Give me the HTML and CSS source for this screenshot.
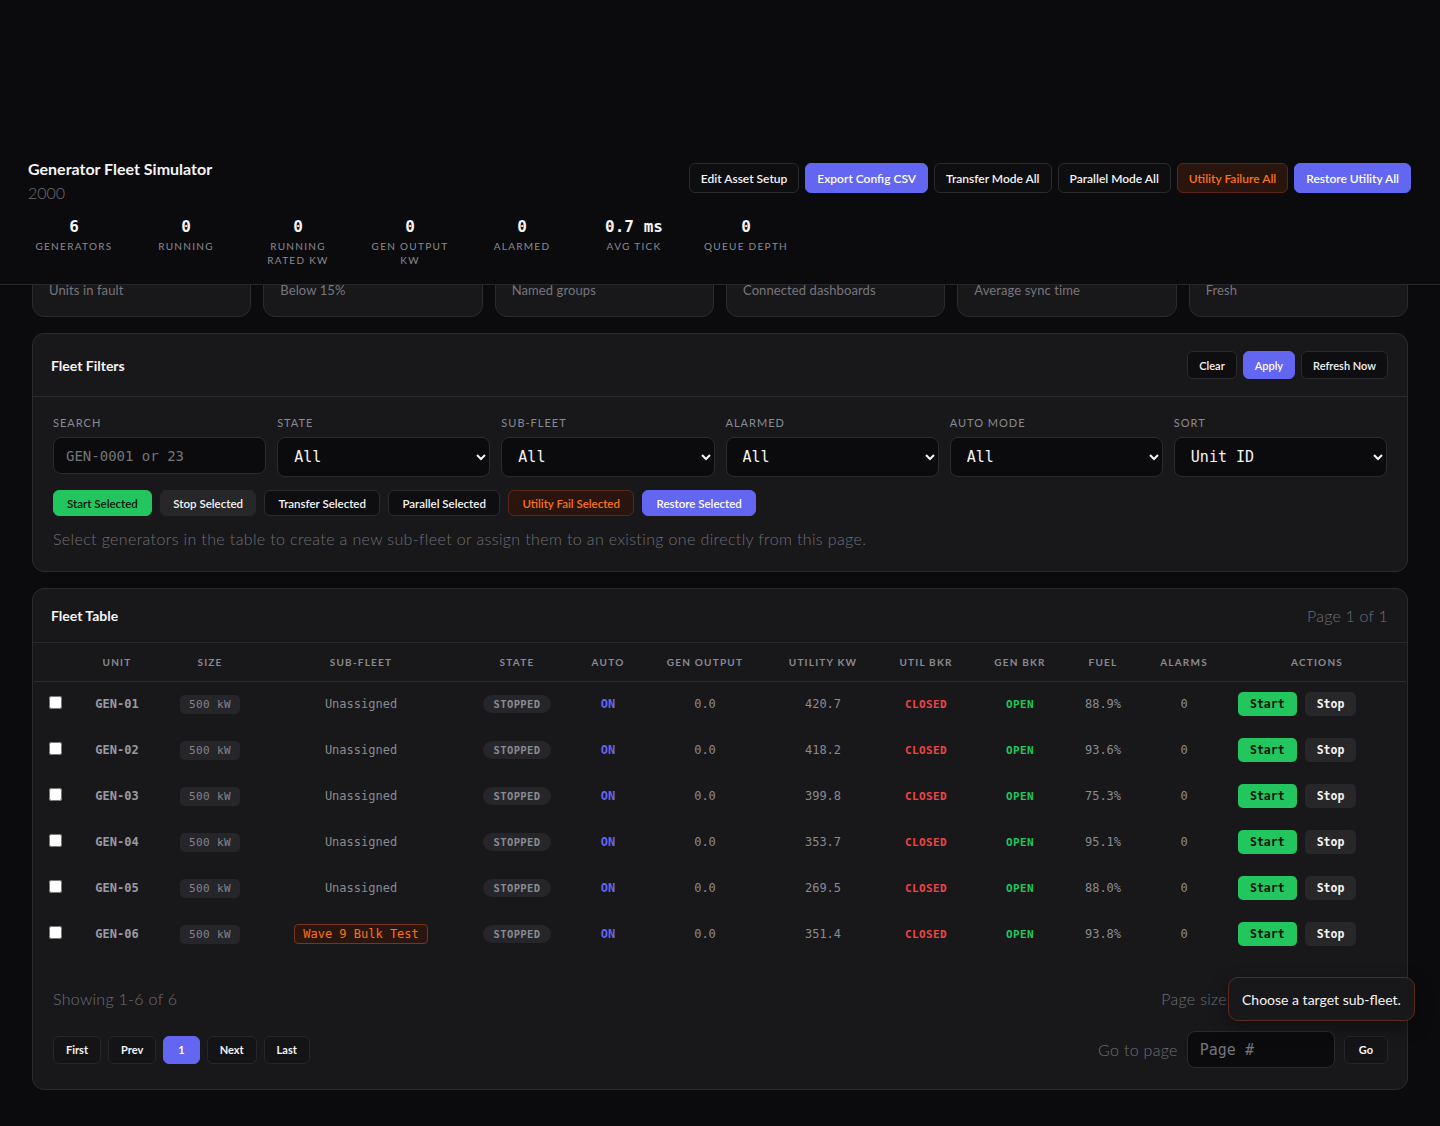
FILE: index.html
```html
<!DOCTYPE html>
<html lang="en">
<head>
<meta charset="utf-8">
<title>Generator Fleet Simulator</title>
<link rel="stylesheet" href="styles.css">
</head>
<body>
<header class="topbar">
  <div class="topbar-row">
    <div class="brand">
      <h1>Generator Fleet Simulator</h1>
      <div class="brand-sub">2000</div>
    </div>
    <div class="top-actions">
      <button class="btn btn-dark">Edit Asset Setup</button>
      <button class="btn btn-primary">Export Config CSV</button>
      <button class="btn btn-dark">Transfer Mode All</button>
      <button class="btn btn-dark">Parallel Mode All</button>
      <button class="btn btn-warn">Utility Failure All</button>
      <button class="btn btn-primary">Restore Utility All</button>
    </div>
  </div>
  <div class="stats">
    <div class="stat"><div class="stat-value">6</div><div class="stat-label">Generators</div></div>
    <div class="stat"><div class="stat-value">0</div><div class="stat-label">Running</div></div>
    <div class="stat"><div class="stat-value">0</div><div class="stat-label">Running Rated kW</div></div>
    <div class="stat"><div class="stat-value">0</div><div class="stat-label">Gen Output kW</div></div>
    <div class="stat"><div class="stat-value">0</div><div class="stat-label">Alarmed</div></div>
    <div class="stat"><div class="stat-value">0.7 ms</div><div class="stat-label">Avg Tick</div></div>
    <div class="stat"><div class="stat-value">0</div><div class="stat-label">Queue Depth</div></div>
  </div>
</header>

<main class="page">
  <section class="cards">
    <div class="card"><div class="card-label">Faulted</div><div class="card-value">0</div><div class="card-sub">Units in fault</div></div>
    <div class="card"><div class="card-label">Low Fuel</div><div class="card-value">0</div><div class="card-sub">Below 15%</div></div>
    <div class="card"><div class="card-label">Sub-Fleets</div><div class="card-value">1</div><div class="card-sub">Named groups</div></div>
    <div class="card"><div class="card-label">Clients</div><div class="card-value">1</div><div class="card-sub">Connected dashboards</div></div>
    <div class="card"><div class="card-label">Sync</div><div class="card-value">0.7 ms</div><div class="card-sub">Average sync time</div></div>
    <div class="card"><div class="card-label">Snapshot</div><div class="card-value">OK</div><div class="card-sub">Fresh</div></div>
  </section>

  <section class="panel">
    <div class="panel-head">
      <h2>Fleet Filters</h2>
      <div class="head-actions">
        <button class="btn btn-dark btn-sm">Clear</button>
        <button class="btn btn-primary btn-sm">Apply</button>
        <button class="btn btn-dark btn-sm">Refresh Now</button>
      </div>
    </div>
    <div class="filters-body">
      <div class="filter-grid">
        <label class="field"><span class="field-label">Search</span><input class="input" type="text" placeholder="GEN-0001 or 23"></label>
        <label class="field"><span class="field-label">State</span><select class="select"><option>All</option></select></label>
        <label class="field"><span class="field-label">Sub-Fleet</span><select class="select"><option>All</option></select></label>
        <label class="field"><span class="field-label">Alarmed</span><select class="select"><option>All</option></select></label>
        <label class="field"><span class="field-label">Auto Mode</span><select class="select"><option>All</option></select></label>
        <label class="field"><span class="field-label">Sort</span><select class="select"><option>Unit ID</option></select></label>
      </div>
      <div class="bulk-actions">
        <button class="btn btn-xs btn-success">Start Selected</button>
        <button class="btn btn-xs btn-muted btn-wide">Stop Selected</button>
        <button class="btn btn-xs btn-dark">Transfer Selected</button>
        <button class="btn btn-xs btn-dark">Parallel Selected</button>
        <button class="btn btn-xs btn-warn">Utility Fail Selected</button>
        <button class="btn btn-xs btn-primary">Restore Selected</button>
      </div>
      <p class="hint">Select generators in the table to create a new sub-fleet or assign them to an existing one directly from this page.</p>
    </div>
  </section>

  <section class="panel">
    <div class="panel-head panel-head-short">
      <h2>Fleet Table</h2>
      <span class="page-info">Page 1 of 1</span>
    </div>
    <table class="fleet">
      <colgroup>
        <col class="c-chk"><col class="c-unit"><col class="c-size"><col class="c-sub"><col class="c-state"><col class="c-auto"><col class="c-out"><col class="c-util"><col class="c-ubkr"><col class="c-gbkr"><col class="c-fuel"><col class="c-alarm"><col class="c-act">
      </colgroup>
      <thead>
        <tr><th></th><th>Unit</th><th>Size</th><th>Sub-Fleet</th><th>State</th><th>Auto</th><th>Gen Output</th><th>Utility kW</th><th>Util Bkr</th><th>Gen Bkr</th><th>Fuel</th><th>Alarms</th><th>Actions</th></tr>
      </thead>
      <tbody>
        <tr><td><input type="checkbox"></td><td class="unit">GEN-01</td><td><span class="size">500 kW</span></td><td class="muted">Unassigned</td><td><span class="state">STOPPED</span></td><td class="on">ON</td><td class="muted">0.0</td><td class="muted">420.7</td><td class="closed">CLOSED</td><td class="open">OPEN</td><td class="muted">88.9%</td><td class="muted">0</td><td class="acts"><div class="acts-wrap"><button class="rbtn rbtn-start">Start</button><button class="rbtn rbtn-stop">Stop</button></div></td></tr>
        <tr><td><input type="checkbox"></td><td class="unit">GEN-02</td><td><span class="size">500 kW</span></td><td class="muted">Unassigned</td><td><span class="state">STOPPED</span></td><td class="on">ON</td><td class="muted">0.0</td><td class="muted">418.2</td><td class="closed">CLOSED</td><td class="open">OPEN</td><td class="muted">93.6%</td><td class="muted">0</td><td class="acts"><div class="acts-wrap"><button class="rbtn rbtn-start">Start</button><button class="rbtn rbtn-stop">Stop</button></div></td></tr>
        <tr><td><input type="checkbox"></td><td class="unit">GEN-03</td><td><span class="size">500 kW</span></td><td class="muted">Unassigned</td><td><span class="state">STOPPED</span></td><td class="on">ON</td><td class="muted">0.0</td><td class="muted">399.8</td><td class="closed">CLOSED</td><td class="open">OPEN</td><td class="muted">75.3%</td><td class="muted">0</td><td class="acts"><div class="acts-wrap"><button class="rbtn rbtn-start">Start</button><button class="rbtn rbtn-stop">Stop</button></div></td></tr>
        <tr><td><input type="checkbox"></td><td class="unit">GEN-04</td><td><span class="size">500 kW</span></td><td class="muted">Unassigned</td><td><span class="state">STOPPED</span></td><td class="on">ON</td><td class="muted">0.0</td><td class="muted">353.7</td><td class="closed">CLOSED</td><td class="open">OPEN</td><td class="muted">95.1%</td><td class="muted">0</td><td class="acts"><div class="acts-wrap"><button class="rbtn rbtn-start">Start</button><button class="rbtn rbtn-stop">Stop</button></div></td></tr>
        <tr><td><input type="checkbox"></td><td class="unit">GEN-05</td><td><span class="size">500 kW</span></td><td class="muted">Unassigned</td><td><span class="state">STOPPED</span></td><td class="on">ON</td><td class="muted">0.0</td><td class="muted">269.5</td><td class="closed">CLOSED</td><td class="open">OPEN</td><td class="muted">88.0%</td><td class="muted">0</td><td class="acts"><div class="acts-wrap"><button class="rbtn rbtn-start">Start</button><button class="rbtn rbtn-stop">Stop</button></div></td></tr>
        <tr><td><input type="checkbox"></td><td class="unit">GEN-06</td><td><span class="size">500 kW</span></td><td><span class="tag">Wave 9 Bulk Test</span></td><td><span class="state">STOPPED</span></td><td class="on">ON</td><td class="muted">0.0</td><td class="muted">351.4</td><td class="closed">CLOSED</td><td class="open">OPEN</td><td class="muted">93.8%</td><td class="muted">0</td><td class="acts"><div class="acts-wrap"><button class="rbtn rbtn-start">Start</button><button class="rbtn rbtn-stop">Stop</button></div></td></tr>
      </tbody>
    </table>
    <div class="table-foot">
      <div class="foot-row">
        <span class="foot-text">Showing 1-6 of 6</span>
        <div class="foot-right">
          <span class="foot-text">Page size</span>
          <div class="pagesize">
            <div class="pagesize-box"></div>
            <div class="tooltip">Choose a target sub-fleet.</div>
          </div>
        </div>
      </div>
      <div class="foot-row">
        <div class="pager">
          <button class="btn btn-dark btn-page">First</button>
          <button class="btn btn-dark btn-page">Prev</button>
          <button class="btn btn-primary btn-page btn-current">1</button>
          <button class="btn btn-dark btn-page">Next</button>
          <button class="btn btn-dark btn-page">Last</button>
        </div>
        <div class="foot-right">
          <span class="foot-text">Go to page</span>
          <input class="input goto" type="text" placeholder="Page #">
          <button class="btn btn-dark btn-page btn-go">Go</button>
        </div>
      </div>
    </div>
  </section>
</main>
</body>
</html>
```

FILE: styles.css
```css
* { box-sizing: border-box; }

html, body {
  margin: 0;
  background: #0b0b0e;
  color: #f4f4f5;
  font-family: Lato, "Open Sans", "Liberation Sans", sans-serif;
}

button { font-family: inherit; cursor: pointer; }

/* ---------- Top bar (fixed overlay) ---------- */
.topbar {
  position: fixed;
  top: 0;
  left: 0;
  right: 0;
  height: 285px;
  padding: 159px 29px 0 28px;
  background: #0b0b0e;
  border-bottom: 1px solid #26262b;
  z-index: 10;
}

.topbar-row {
  display: flex;
  justify-content: space-between;
  align-items: flex-start;
}

.brand h1 {
  margin: 0;
  font-size: 16px;
  line-height: 20px;
  font-weight: 700;
  color: #f4f4f5;
}

.brand-sub {
  margin-top: 4px;
  font-size: 16px;
  line-height: 20px;
  font-weight: 300;
  color: #6e6e75;
}

.top-actions {
  display: flex;
  gap: 6px;
  margin-top: 4px;
}

.btn {
  height: 30px;
  padding: 0 11px;
  border-radius: 6px;
  border: 1px solid #2a2a2f;
  background: #0e0e11;
  color: #f4f4f5;
  font-size: 12px;
  font-weight: 600;
  white-space: nowrap;
}

.btn-dark { background: #0e0e11; border-color: #2a2a2f; color: #f4f4f5; }
.btn-primary { background: #6366f1; border-color: #6366f1; color: #ffffff; }
.btn-warn { background: #2a150e; border-color: #5b2816; color: #f97316; }
.btn-success { background: #22c55e; border-color: #22c55e; color: #07120b; }
.btn-muted { background: #27272a; border-color: #27272a; color: #f4f4f5; }

.btn-sm { height: 28px; padding: 0 11px; font-size: 11px; }
.btn-xs { height: 26px; padding: 0 13px; font-size: 11.5px; }
.btn-wide { padding: 0 12px; }

.stats {
  display: flex;
  gap: 20px;
  margin-top: 14px;
}

.stat {
  width: 92px;
  text-align: center;
}

.stat-value {
  font-family: "DejaVu Sans Mono", "Liberation Mono", monospace;
  font-size: 16px;
  line-height: 19px;
  font-weight: 700;
  color: #f4f4f5;
}

.stat-label {
  margin-top: 3px;
  font-size: 10px;
  line-height: 14px;
  letter-spacing: 1.3px;
  text-transform: uppercase;
  color: #8a8a91;
}

/* ---------- Page ---------- */
.page {
  padding: 200px 32px 37px;
  display: flex;
  flex-direction: column;
  gap: 16px;
}

.cards {
  display: grid;
  grid-template-columns: repeat(6, 1fr);
  gap: 12px;
}

.card {
  height: 117px;
  padding: 0 16px 18px;
  display: flex;
  flex-direction: column;
  justify-content: flex-end;
  background: #18181b;
  border: 1px solid #2a2a2f;
  border-radius: 12px;
}

.card-label { font-size: 11px; color: #8a8a91; text-transform: uppercase; }
.card-value { font-size: 20px; font-weight: 700; margin: 6px 0 10px; }
.card-sub { font-size: 13px; line-height: 16px; color: #76767d; letter-spacing: 0.1px; }

.panel {
  background: #18181b;
  border: 1px solid #2a2a2f;
  border-radius: 12px;
}

.panel-head {
  display: flex;
  justify-content: space-between;
  align-items: center;
  height: 63px;
  padding: 0 19px 0 18px;
  border-bottom: 1px solid #2a2a2f;
}

.panel-head-short { height: 54px; }

.panel-head h2 {
  margin: 0;
  font-size: 14px;
  font-weight: 700;
  color: #f4f4f5;
}

.head-actions { display: flex; gap: 6px; }

.page-info {
  font-size: 16px;
  font-weight: 300;
  letter-spacing: 0.2px;
  color: #6e6e75;
}

/* ---------- Filters ---------- */
.filters-body {
  padding: 19px 20px 21px;
}

.filter-grid {
  display: grid;
  grid-template-columns: repeat(6, 1fr);
  gap: 11px;
}

.field {
  display: flex;
  flex-direction: column;
  gap: 7px;
}

.field-label {
  font-size: 11px;
  line-height: 14px;
  letter-spacing: 1px;
  text-transform: uppercase;
  color: #8a8a91;
}

.input {
  height: 37px;
  padding: 0 12px;
  background: #0b0b0e;
  border: 1px solid #2a2a2f;
  border-radius: 8px;
  color: #f4f4f5;
  font-family: "DejaVu Sans Mono", "Liberation Mono", monospace;
  font-size: 14px;
  outline: none;
}

.input::placeholder { color: #74747b; }

.select {
  height: 40px;
  width: 100%;
  padding: 0 12px;
  background: #0b0b0e;
  border: 1px solid #2a2a2f;
  border-radius: 8px;
  color: #f4f4f5;
  font-family: "DejaVu Sans Mono", "Liberation Mono", monospace;
  font-size: 15px;
  color-scheme: dark;
}

.bulk-actions {
  display: flex;
  gap: 8.5px;
  margin-top: 13px;
}

.hint {
  margin: 12px 0 0;
  font-size: 16px;
  line-height: 22px;
  font-weight: 300;
  letter-spacing: 0.37px;
  color: #6e6e75;
}

/* ---------- Table ---------- */
.fleet {
  width: calc(100% - 2px);
  margin: 0 1px;
  border-collapse: collapse;
  table-layout: fixed;
}

.c-chk { width: 42px; }
.c-unit { width: 82px; }
.c-size { width: 104px; }
.c-sub { width: 198px; }
.c-state { width: 114px; }
.c-auto { width: 68px; }
.c-out { width: 126px; }
.c-util { width: 110px; }
.c-ubkr { width: 96px; }
.c-gbkr { width: 92px; }
.c-fuel { width: 74px; }
.c-alarm { width: 88px; }
.c-act { width: 178px; }

.fleet th {
  height: 38px;
  padding: 0;
  font-size: 10px;
  font-weight: 700;
  letter-spacing: 1.2px;
  text-transform: uppercase;
  color: #8a8a91;
  border-bottom: 1px solid #2a2a2f;
  text-align: center;
}

.fleet td {
  height: 46px;
  text-align: center;
  font-family: "DejaVu Sans Mono", "Liberation Mono", monospace;
  font-size: 12px;
  color: #8a8a91;
  padding: 0;
}

.fleet td input[type="checkbox"] {
  margin: 0;
  width: 13px;
  height: 13px;
}

.fleet td.unit { font-weight: 700; color: #9a9aa2; }

.size {
  display: inline-block;
  padding: 3px 9px;
  border-radius: 5px;
  background: #26262a;
  color: #83838a;
  font-size: 11px;
  letter-spacing: 0.4px;
}

.state {
  display: inline-block;
  padding: 3px 10px;
  border-radius: 999px;
  background: #26262a;
  color: #8a8a91;
  font-size: 10.5px;
  font-weight: 700;
  letter-spacing: 0.4px;
}

.tag {
  display: inline-block;
  padding: 2px 8px;
  border-radius: 4px;
  border: 1px solid #7a3418;
  background: #2b160f;
  color: #f97316;
  font-size: 12px;
}

.fleet td.on { color: #6366f1; font-weight: 700; }
.fleet td.closed { color: #ef4444; font-weight: 700; font-size: 11px; letter-spacing: 0.4px; }
.fleet td.open { color: #22c55e; font-weight: 700; font-size: 11px; letter-spacing: 0.4px; }

.fleet td.acts { text-align: left; padding-left: 10px; }

.acts-wrap {
  display: flex;
  gap: 8px;
}

.rbtn {
  height: 24px;
  padding: 0 12px;
  border: none;
  border-radius: 5px;
  font-family: "DejaVu Sans Mono", "Liberation Mono", monospace;
  font-size: 11.5px;
  font-weight: 700;
}

.rbtn-start { background: #22c55e; color: #07120b; }
.rbtn-stop { background: #27272a; color: #f4f4f5; }

/* ---------- Footer ---------- */
.table-foot {
  padding: 23px 19px 21px 20px;
  display: flex;
  flex-direction: column;
  gap: 15px;
}

.foot-row {
  display: flex;
  justify-content: space-between;
  align-items: center;
}

.foot-text {
  font-size: 16px;
  font-weight: 300;
  letter-spacing: 0.3px;
  color: #6e6e75;
}

.foot-right {
  display: flex;
  align-items: center;
  gap: 9px;
}

.pagesize {
  position: relative;
  width: 152px;
  height: 36px;
}

.pagesize-box {
  height: 100%;
  border-radius: 8px;
  background: #0b0b0e;
  border: 1px solid #2a2a2f;
}

.tooltip {
  position: absolute;
  left: -8px;
  top: -3px;
  height: 44px;
  padding: 0 13px;
  display: flex;
  align-items: center;
  white-space: nowrap;
  background: #18181b;
  border: 1px solid #5a2a1c;
  border-radius: 10px;
  color: #f4f4f5;
  font-size: 14px;
  box-shadow: 0 6px 18px rgba(0, 0, 0, 0.35);
}

.pager { display: flex; gap: 7px; }

.btn-page {
  height: 28px;
  padding: 0 12px;
  font-size: 11px;
  font-weight: 700;
  background: #141417;
  border-color: #26262b;
}

.btn-current { background: #6366f1; border-color: #6366f1; padding: 0 14px; }

.goto {
  width: 148px;
  height: 37px;
  font-size: 15px;
}

.btn-go { padding: 0 14px; }
```
